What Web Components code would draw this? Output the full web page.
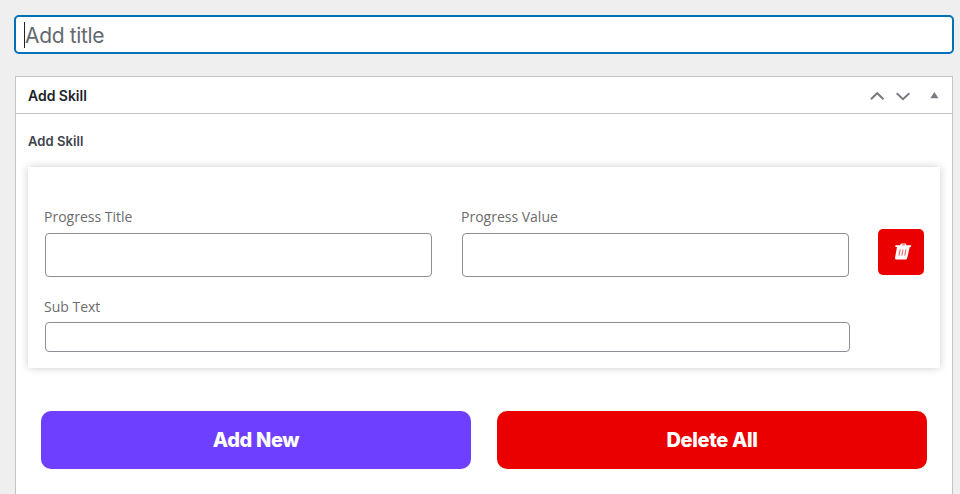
<!DOCTYPE html>
<html lang="en">
<head>
<meta charset="utf-8">
<title>Add Skill</title>
<style>
html,body{height:100%}
body{margin:0;background:#efefef;font-family:Inter,"Liberation Sans",sans-serif;overflow:hidden}
</style>
</head>
<body>
<skill-editor></skill-editor>
<script>
const define = (name, html) => customElements.define(name, class extends HTMLElement {
  constructor() {
    super();
    const t = document.createElement('template');
    t.innerHTML = html;
    this.attachShadow({mode: 'open'}).append(t.content.cloneNode(true));
  }
});

define('title-field', `<style>
:host{display:flex;align-items:center;box-sizing:border-box;height:39px;border:2px solid #0071b5;border-radius:5px;background:#fff;padding-left:8px;color:#646970;font-size:21px;line-height:30px;letter-spacing:-.35px}
i{width:1px;height:26px;background:#1d2327}
span{white-space:nowrap;position:relative;top:1px}
</style><i></i><span><slot></slot></span>`);

define('panel-header', `<style>
:host{display:flex;align-items:center;box-sizing:border-box;height:37px;border-bottom:1px solid #c3c4c7;padding:0 12px;color:#1d2327;font-size:14px;font-weight:600;line-height:20px;letter-spacing:-.03px}
span{flex:1;padding-top:2px}
svg{display:block}
</style><span><slot></slot></span>
<svg width="74" height="20" viewBox="0 0 74 20" fill="none">
<path d="M4.9 14.2 11.2 8.2 17.5 14.2M30.7 8.2 37 14.2 43.3 8.2" stroke="#787c82" stroke-width="2"/>
<path d="M64.3 13.3 68.4 7 72.5 13.3Z" fill="#787c82"/></svg>`);

define('text-field', `<style>
:host{display:block;font-family:"Open Sans","Noto Sans",sans-serif;font-size:14px;line-height:20px;color:#6c6c6c}
label{display:block;height:var(--label,26px);white-space:nowrap}
div{box-sizing:border-box;height:var(--box,44px);margin-left:1px;border:1px solid #8c8f94;border-radius:4px;background:#fff}
</style><label><slot></slot></label><div></div>`);

define('trash-button', `<style>
:host{display:flex;align-items:center;justify-content:center;box-sizing:border-box;width:46px;height:46px;padding-left:3px;border-radius:5px;background:#eb0000}
svg{display:block}
</style><svg width="18" height="20" viewBox="0 0 18 20">
<path d="M1.2 4.9 1.5 3.3H6L6.6 2.1Q7 1.4 7.8 1.4H11.2Q12 1.4 12.1 2.1L12.2 3.3H17.2L16.8 4.9Z" fill="#fff"/>
<path d="M3 4.7H15.8L13.2 16Q12.8 17.5 11.5 17.5H2.5Q.9 17.5 1 16Z" fill="#fff"/>
<path d="M8.2 3.3 8.5 2.6H10.8V3.3Z" fill="#eb0000"/>
<path d="M6.2 7.3 4.9 13.7M9.1 7.3 7.8 13.7M12 7.3 10.7 13.7" stroke="#f16666" stroke-width="1.1"/></svg>`);

define('action-button', `<style>
:host{display:flex;align-items:center;justify-content:center;flex:1;height:58px;border-radius:10px;background:var(--fill);color:#fff;font-size:20px;font-weight:800;line-height:30px;letter-spacing:-.35px;white-space:nowrap}
</style><slot></slot>`);

define('skill-card', `<style>
:host{display:block;box-sizing:border-box;height:201px;padding:40px 16px 0;background:#fff;box-shadow:0 0 8px rgba(0,0,0,.2)}
.row{display:flex;height:90px}
.row text-field{width:388px;margin-right:29px}
trash-button{margin-top:22px}
.wide{width:806px;--label:25px;--box:30px}
</style>
<div class="row"><text-field>Progress Title</text-field><text-field>Progress Value</text-field><trash-button></trash-button></div>
<text-field class="wide">Sub Text</text-field>`);

define('skill-panel', `<style>
:host{display:block;box-sizing:border-box;height:440px;border:1px solid #c3c4c7;background:#fff}
h4{margin:0;padding:17px 12px 0;height:36px;font-size:13px;font-weight:600;line-height:20px;letter-spacing:.07px;color:#3c434a}
skill-card{margin:0 12px}
.actions{display:flex;gap:26px;margin:43px 25px 0}
</style>
<panel-header>Add Skill</panel-header>
<h4>Add Skill</h4>
<skill-card></skill-card>
<div class="actions"><action-button style="--fill:#6f3fff">Add New</action-button><action-button style="--fill:#eb0000">Delete All</action-button></div>`);

define('skill-editor', `<style>
:host{display:block;padding:15px 6px 0 14px}
skill-panel{margin:22px 1px 0}
</style>
<title-field>Add title</title-field><skill-panel></skill-panel>`);
</script>
</body>
</html>
